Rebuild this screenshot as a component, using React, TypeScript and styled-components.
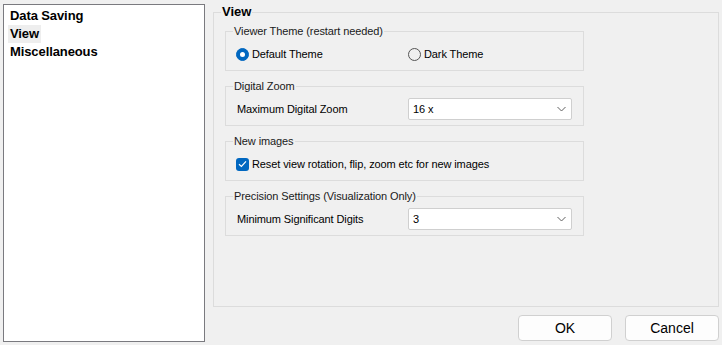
import * as React from 'react';
import styled, { createGlobalStyle } from 'styled-components';

const GlobalStyle = createGlobalStyle`
  html, body {
    margin: 0;
    padding: 0;
    background: #f0f0f0;
  }
  body {
    font-family: "Liberation Sans", Arial, sans-serif;
    color: #000;
  }
`;

const Window = styled.div`
  width: 722px;
  height: 345px;
  box-sizing: border-box;
  padding: 4px 3px 3px 3px;
  display: flex;
  gap: 8px;
  background: #f0f0f0;
`;

const PageList = styled.ul`
  width: 202px;
  box-sizing: border-box;
  margin: 0;
  padding: 2px 4px;
  list-style: none;
  background: #fff;
  border: 1px solid #7a7a7f;
`;

const PageItem = styled.li<{ $selected?: boolean }>`
  display: table;
  height: 18px;
  line-height: 18px;
  padding: 0 2px;
  font-size: 13px;
  font-weight: bold;
  letter-spacing: -0.1px;
  background: ${(p) => (p.$selected ? '#eeeeee' : 'transparent')};
`;

const Side = styled.div`
  flex: 1;
  display: flex;
  flex-direction: column;
`;

const Group = styled.fieldset`
  margin: 0;
  padding: 0;
  min-width: 0;
  border: 1px solid #dcdcdc;
`;

const MainGroup = styled(Group)`
  flex: 1;
`;

const MainTitle = styled.legend`
  margin-left: 7px;
  padding: 0 1px;
  font-size: 13px;
  font-weight: bold;
  line-height: 16px;
`;

const MainBody = styled.div`
  padding: 4px 0 0 11px;
  display: flex;
  flex-direction: column;
  gap: 8px;
`;

const SubGroup = styled(Group)`
  width: 359px;
  box-sizing: border-box;
`;

const SubTitle = styled.legend`
  margin-left: 7px;
  padding: 0 1px;
  font-size: 11px;
  letter-spacing: -0.1px;
  line-height: 14px;
  color: #1a1a1a;
`;

const Row = styled.div`
  display: grid;
  grid-template-columns: 172px 164px;
  align-items: center;
  height: 22px;
  padding: 5px 10px;
  font-size: 11px;
  letter-spacing: -0.1px;
`;

const Label = styled.span`
  padding-left: 1px;
`;

const Choice = styled.label`
  display: flex;
  align-items: center;
  gap: 3px;
`;

const RadioMark = styled.span<{ $on?: boolean }>`
  width: 13px;
  height: 13px;
  box-sizing: border-box;
  border-radius: 50%;
  background: ${(p) => (p.$on ? '#0067c0' : 'transparent')};
  border: 1px solid ${(p) => (p.$on ? '#0067c0' : '#555')};
  display: flex;
  align-items: center;
  justify-content: center;
  &::after {
    content: '';
    display: ${(p) => (p.$on ? 'block' : 'none')};
    width: 5px;
    height: 5px;
    border-radius: 50%;
    background: #fff;
  }
`;

const CheckMark = styled.span`
  width: 13px;
  height: 13px;
  border-radius: 3px;
  background: #0067c0;
  display: flex;
  align-items: center;
  justify-content: center;
`;

const CheckRow = styled(Row)`
  display: flex;
`;

const Select = styled.div`
  height: 22px;
  box-sizing: border-box;
  display: flex;
  align-items: center;
  justify-content: space-between;
  padding: 0 5px 0 4px;
  background: #fff;
  border: 1px solid #cfcfcf;
  border-radius: 2px;
  font-size: 11px;
`;

const Buttons = styled.div`
  display: flex;
  justify-content: flex-end;
  gap: 13px;
  margin: 8px 0 1px;
`;

const Button = styled.button`
  width: 94px;
  height: 26px;
  background: #fdfdfd;
  border: 1px solid #d0d0d0;
  border-radius: 4px;
  font-family: "Liberation Sans", Arial, sans-serif;
  font-size: 14px;
  color: #000;
  padding: 0;
`;

const Chevron = () => (
  <svg width="9" height="6" viewBox="0 0 9 6">
    <path d="M0.5 1 L4.5 5 L8.5 1" fill="none" stroke="#606060" strokeWidth="1" />
  </svg>
);

const Tick = () => (
  <svg width="9" height="8" viewBox="0 0 9 8">
    <path d="M1 4.2 L3.4 6.4 L8 1.4" fill="none" stroke="#fff" strokeWidth="1.2" />
  </svg>
);

const Dropdown = ({ value }: { value: string }) => (
  <Select>
    <span>{value}</span>
    <Chevron />
  </Select>
);

export default function App() {
  return (
    <Window>
      <GlobalStyle />
      <PageList>
        <PageItem>Data Saving</PageItem>
        <PageItem $selected>View</PageItem>
        <PageItem>Miscellaneous</PageItem>
      </PageList>
      <Side>
        <MainGroup>
          <MainTitle>View</MainTitle>
          <MainBody>
            <SubGroup>
              <SubTitle>Viewer Theme (restart needed)</SubTitle>
              <Row>
                <Choice>
                  <RadioMark $on />
                  Default Theme
                </Choice>
                <Choice>
                  <RadioMark />
                  Dark Theme
                </Choice>
              </Row>
            </SubGroup>
            <SubGroup>
              <SubTitle>Digital Zoom</SubTitle>
              <Row>
                <Label>Maximum Digital Zoom</Label>
                <Dropdown value="16 x" />
              </Row>
            </SubGroup>
            <SubGroup>
              <SubTitle>New images</SubTitle>
              <CheckRow>
                <Choice>
                  <CheckMark>
                    <Tick />
                  </CheckMark>
                  Reset view rotation, flip, zoom etc for new images
                </Choice>
              </CheckRow>
            </SubGroup>
            <SubGroup>
              <SubTitle>Precision Settings (Visualization Only)</SubTitle>
              <Row>
                <Label>Minimum Significant Digits</Label>
                <Dropdown value="3" />
              </Row>
            </SubGroup>
          </MainBody>
        </MainGroup>
        <Buttons>
          <Button type="button">OK</Button>
          <Button type="button">Cancel</Button>
        </Buttons>
      </Side>
    </Window>
  );
}
